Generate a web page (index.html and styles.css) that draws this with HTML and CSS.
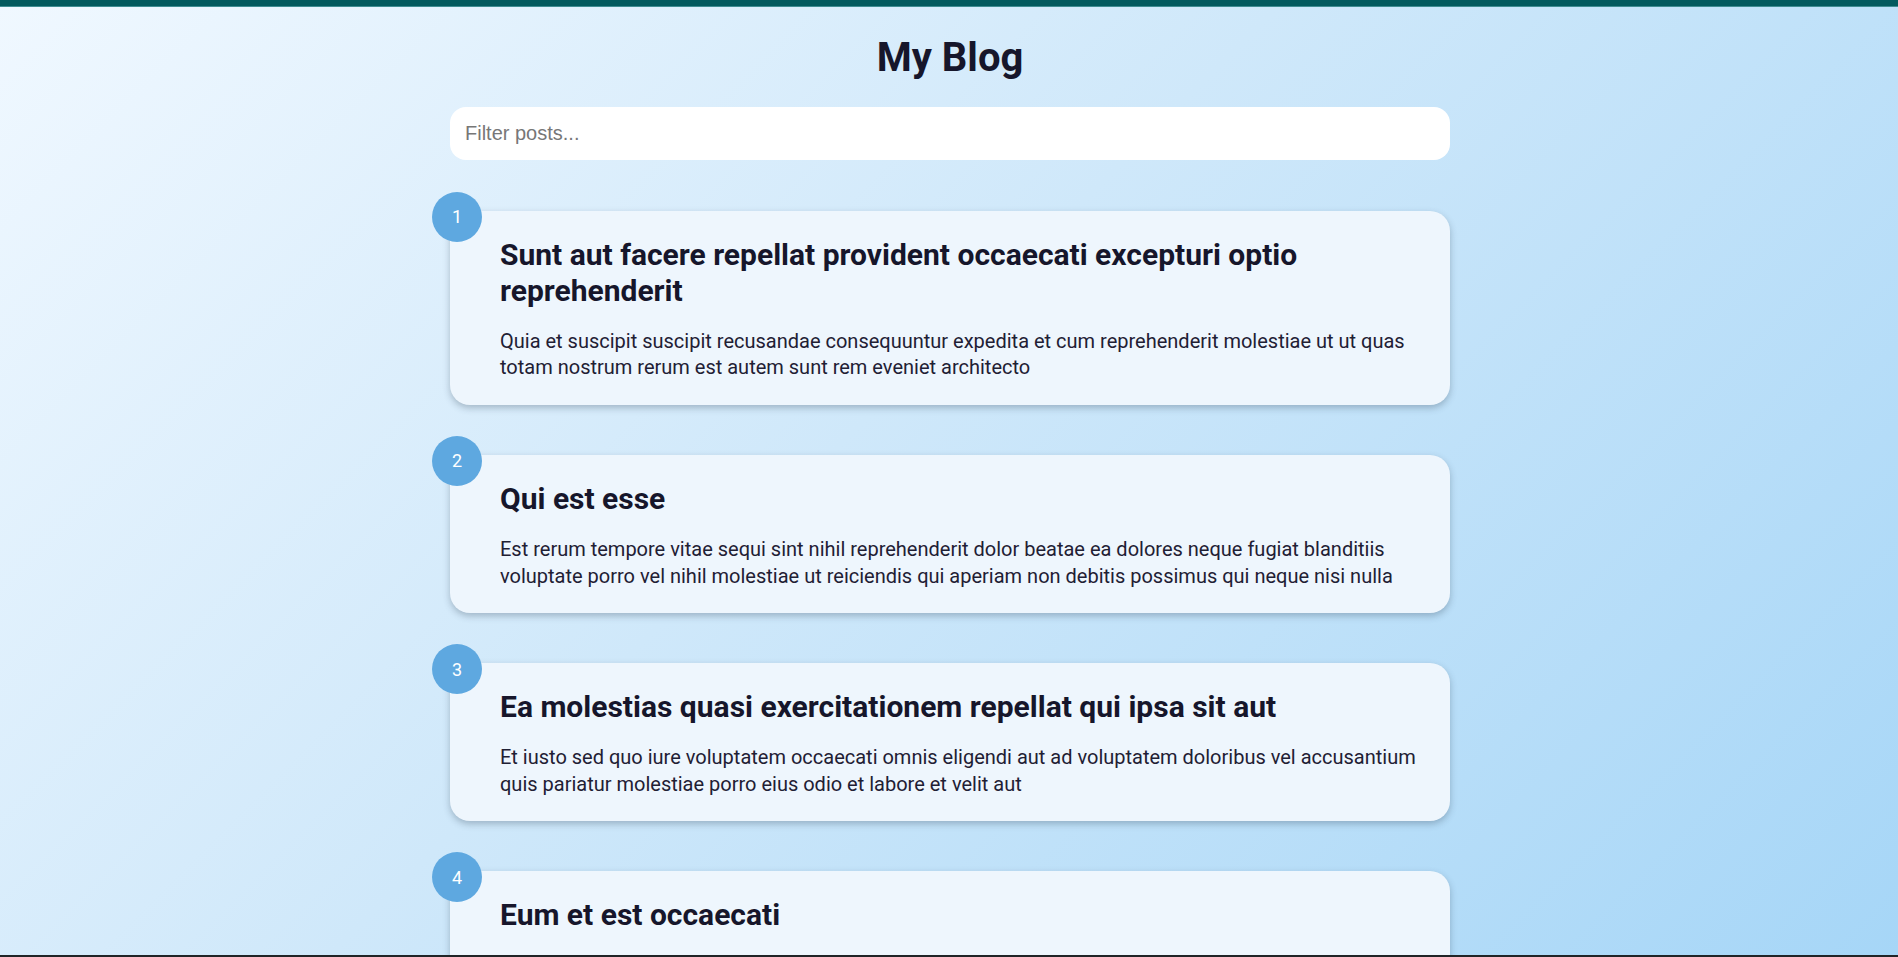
FILE: index.html
```html
<!DOCTYPE html>
<html lang="en">
<head>
<meta charset="utf-8">
<title>My Blog</title>
<link rel="stylesheet" href="styles.css">
</head>
<body>
<div class="topbar"></div>
<main class="page">
  <h1 class="page-title">My Blog</h1>
  <input class="filter" type="text" placeholder="Filter posts...">
  <ul class="posts">
    <li class="post">
      <span class="post-num">1</span>
      <h2 class="post-title">Sunt aut facere repellat provident occaecati excepturi optio reprehenderit</h2>
      <p class="post-body">Quia et suscipit suscipit recusandae consequuntur expedita et cum reprehenderit molestiae ut ut quas totam nostrum rerum est autem sunt rem eveniet architecto</p>
    </li>
    <li class="post">
      <span class="post-num">2</span>
      <h2 class="post-title">Qui est esse</h2>
      <p class="post-body">Est rerum tempore vitae sequi sint nihil reprehenderit dolor beatae ea dolores neque fugiat blanditiis voluptate porro vel nihil molestiae ut reiciendis qui aperiam non debitis possimus qui neque nisi nulla</p>
    </li>
    <li class="post">
      <span class="post-num">3</span>
      <h2 class="post-title">Ea molestias quasi exercitationem repellat qui ipsa sit aut</h2>
      <p class="post-body">Et iusto sed quo iure voluptatem occaecati omnis eligendi aut ad voluptatem doloribus vel accusantium quis pariatur molestiae porro eius odio et labore et velit aut</p>
    </li>
    <li class="post">
      <span class="post-num">4</span>
      <h2 class="post-title">Eum et est occaecati</h2>
      <p class="post-body">Ullam et saepe reiciendis voluptatem adipisci sit amet autem assumenda provident rerum culpa quis hic commodi nesciunt rem tenetur doloremque ipsam iure quis sunt voluptatem rerum illo velit</p>
    </li>
    <li class="post">
      <span class="post-num">5</span>
      <h2 class="post-title">Nesciunt quas odio</h2>
      <p class="post-body">Repudiandae veniam quaerat sunt sed alias aut fugiat sit autem sed est voluptatem omnis possimus esse voluptatibus quis est aut tenetur dolor neque</p>
    </li>
  </ul>
</main>
<div class="bottombar"></div>
</body>
</html>
```

FILE: styles.css
```css
html {
  scrollbar-width: none;
}
html::-webkit-scrollbar {
  display: none;
}
body {
  margin: 0;
  min-height: 100vh;
  font-family: Roboto, "Noto Sans", Arial, sans-serif;
  color: #1a1a2e;
  background: linear-gradient(135deg, #f0f8ff 0%, #cfe8fa 45%, #a6d6f7 100%);
  background-attachment: fixed;
}
.topbar {
  height: 6px;
  background: #035a5e;
  border-bottom: 1px solid #3f8d92;
}
.bottombar {
  position: fixed;
  left: 0;
  right: 0;
  bottom: 0;
  height: 2px;
  background: #202427;
}
.page {
  width: 1000px;
  margin: 0 auto;
  padding: 28px 0 40px 2px;
}
.page-title {
  margin: 0 0 25px;
  font-size: 40px;
  line-height: 1.17;
  font-weight: 700;
  text-align: center;
  color: #16162b;
}
.filter {
  display: block;
  box-sizing: border-box;
  width: 100%;
  height: 53px;
  padding: 0 15px;
  border: none;
  border-radius: 16px;
  background: #fff;
  font-family: "Liberation Sans", Arial, sans-serif;
  font-size: 20px;
  color: #333;
  outline: none;
}
.filter::placeholder {
  color: #777;
}
.posts {
  list-style: none;
  margin: 51px 0 0;
  padding: 0;
  display: flex;
  flex-direction: column;
  gap: 50px;
}
.post {
  position: relative;
  padding: 26px 30px 24px 50px;
  background: #eef6fd;
  border-radius: 20px;
  box-shadow: 0 3px 7px rgba(40, 60, 80, 0.3);
}
.post-num {
  position: absolute;
  top: -19px;
  left: -18px;
  width: 50px;
  height: 50px;
  border-radius: 50%;
  background: #5ea8e0;
  color: #fff;
  font-size: 18px;
  display: flex;
  align-items: center;
  justify-content: center;
}
.post-title {
  margin: 0 0 19px;
  font-size: 30px;
  line-height: 36px;
  font-weight: 700;
  color: #16162b;
}
.post-body {
  margin: 0;
  font-size: 20px;
  line-height: 26.6px;
  color: #1f2034;
}
```
